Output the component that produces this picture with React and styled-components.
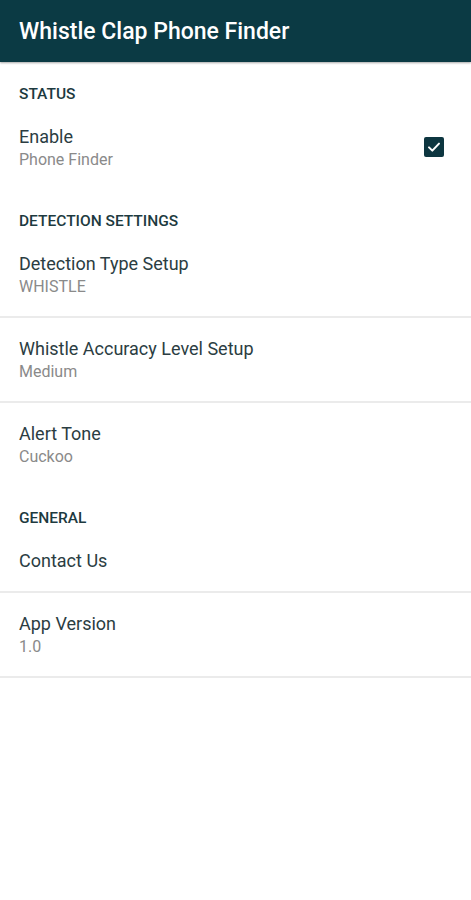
import React from 'react'
import styled, { createGlobalStyle } from 'styled-components'

const GlobalStyle = createGlobalStyle`
  body {
    margin: 0;
    background: #ffffff;
    font-family: Roboto, "Noto Sans", sans-serif;
  }
`

const Page = styled.div`
  width: 471px;
  min-height: 900px;
  background: #ffffff;
`

const AppBar = styled.header`
  height: 62px;
  background-color: #0b3a44;
  display: flex;
  align-items: center;
  padding: 0 19px;
  box-shadow: 0 1px 2px rgba(0, 0, 0, 0.35);
`

const AppTitle = styled.h1`
  margin: 0;
  color: #ffffff;
  font-size: 23px;
  font-weight: 500;
`

const SectionHeader = styled.div`
  padding: 22px 19px 2px;
  font-size: 15.5px;
  line-height: 20px;
  font-weight: 500;
  color: #1d3a40;
  text-transform: uppercase;
`

const Item = styled.div`
  display: flex;
  align-items: center;
  padding: 19px 19px 18px;
  border-bottom: ${p => (p.divider ? '2px solid #ebebeb' : 'none')};
`

const Texts = styled.div`
  flex: 1;
  display: flex;
  flex-direction: column;
`

const Title = styled.div`
  font-size: 18px;
  line-height: 24px;
  color: #2b3d42;
`

const Subtitle = styled.div`
  font-size: 16px;
  line-height: 22px;
  color: #8a8a8a;
`

const CheckBox = styled.span`
  width: 20px;
  height: 20px;
  border-radius: 2px;
  background: #0d3640;
  display: flex;
  align-items: center;
  justify-content: center;
  margin-right: 8px;
  margin-bottom: 2px;
`

const Check = () => (
  <svg width="16" height="16" viewBox="0 0 24 24">
    <path d="M4.5 12.5l5 5 10-10.5" fill="none" stroke="#ffffff" strokeWidth="3" strokeLinecap="round" strokeLinejoin="round" />
  </svg>
)

const sections = [
  {
    header: 'Status',
    items: [{ title: 'Enable', sub: 'Phone Finder', checked: true }],
  },
  {
    header: 'Detection Settings',
    items: [
      { title: 'Detection Type Setup', sub: 'WHISTLE', divider: true },
      { title: 'Whistle Accuracy Level Setup', sub: 'Medium', divider: true },
      { title: 'Alert Tone', sub: 'Cuckoo' },
    ],
  },
  {
    header: 'General',
    items: [
      { title: 'Contact Us', divider: true },
      { title: 'App Version', sub: '1.0', divider: true },
    ],
  },
]

const App = () => {
  return (
    <Page>
      <GlobalStyle />
      <AppBar>
        <AppTitle>Whistle Clap Phone Finder</AppTitle>
      </AppBar>
      {sections.map(s => (
        <section key={s.header}>
          <SectionHeader>{s.header}</SectionHeader>
          {s.items.map(item => (
            <Item key={item.title} divider={item.divider}>
              <Texts>
                <Title>{item.title}</Title>
                {item.sub && <Subtitle>{item.sub}</Subtitle>}
              </Texts>
              {item.checked && (
                <CheckBox>
                  <Check />
                </CheckBox>
              )}
            </Item>
          ))}
        </section>
      ))}
    </Page>
  )
}

export default App
